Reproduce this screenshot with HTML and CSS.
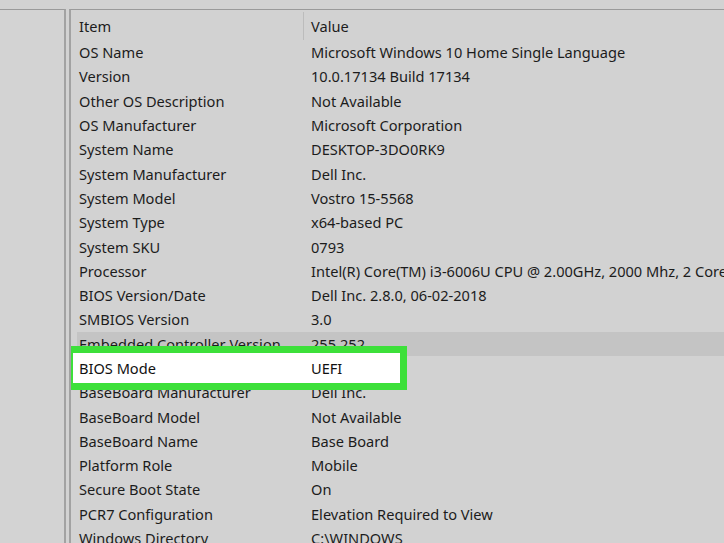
FILE: index.html
```html
<!DOCTYPE html>
<html>
<head>
<meta charset="utf-8">
<link rel="stylesheet" href="styles.css">
</head>
<body>
<div class="window">
  <div class="tree-pane"></div>
  <div class="list-pane">
    <div class="list-header">
      <div class="col-item">Item</div>
      <div class="col-value">Value</div>
    </div>
    <div class="rows">
      <div class="row"><div class="col-item">OS Name</div><div class="col-value">Microsoft Windows 10 Home Single Language</div></div>
      <div class="row"><div class="col-item">Version</div><div class="col-value">10.0.17134 Build 17134</div></div>
      <div class="row"><div class="col-item">Other OS Description</div><div class="col-value">Not Available</div></div>
      <div class="row"><div class="col-item">OS Manufacturer</div><div class="col-value">Microsoft Corporation</div></div>
      <div class="row"><div class="col-item">System Name</div><div class="col-value">DESKTOP-3DO0RK9</div></div>
      <div class="row"><div class="col-item">System Manufacturer</div><div class="col-value">Dell Inc.</div></div>
      <div class="row"><div class="col-item">System Model</div><div class="col-value">Vostro 15-5568</div></div>
      <div class="row"><div class="col-item">System Type</div><div class="col-value">x64-based PC</div></div>
      <div class="row"><div class="col-item">System SKU</div><div class="col-value">0793</div></div>
      <div class="row"><div class="col-item">Processor</div><div class="col-value">Intel(R) Core(TM) i3-6006U CPU @ 2.00GHz, 2000 Mhz, 2 Core(s), 4 Logical Processor(s)</div></div>
      <div class="row"><div class="col-item">BIOS Version/Date</div><div class="col-value">Dell Inc. 2.8.0, 06-02-2018</div></div>
      <div class="row"><div class="col-item">SMBIOS Version</div><div class="col-value">3.0</div></div>
      <div class="row selected"><div class="col-item">Embedded Controller Version</div><div class="col-value">255.252</div></div>
      <div class="row callout"><div class="col-item">BIOS Mode</div><div class="col-value">UEFI</div></div>
      <div class="row"><div class="col-item">BaseBoard Manufacturer</div><div class="col-value">Dell Inc.</div></div>
      <div class="row"><div class="col-item">BaseBoard Model</div><div class="col-value">Not Available</div></div>
      <div class="row"><div class="col-item">BaseBoard Name</div><div class="col-value">Base Board</div></div>
      <div class="row"><div class="col-item">Platform Role</div><div class="col-value">Mobile</div></div>
      <div class="row"><div class="col-item">Secure Boot State</div><div class="col-value">On</div></div>
      <div class="row"><div class="col-item">PCR7 Configuration</div><div class="col-value">Elevation Required to View</div></div>
      <div class="row"><div class="col-item">Windows Directory</div><div class="col-value">C:\WINDOWS</div></div>
    </div>
  </div>
</div>
</body>
</html>
```

FILE: styles.css
```css
*, *::before, *::after { box-sizing: border-box; }
html, body {
  margin: 0;
  padding: 0;
  width: 724px;
  height: 543px;
  overflow: hidden;
  background: #d2d2d2;
  font-family: "Noto Sans", "Open Sans", sans-serif;
  font-size: 14.6px;
  color: #1c1c1c;
}
.window {
  display: flex;
  gap: 3px;
  padding-top: 9px;
  height: 543px;
}
.tree-pane {
  width: 66px;
  flex: none;
  border-top: 1px solid #9a9a9a;
  border-right: 2px solid #a2a2a2;
  background: #d3d3d3;
}
.list-pane {
  flex: 1;
  min-width: 0;
  border-top: 1px solid #9a9a9a;
  border-left: 2px solid #a2a2a2;
  background: #d2d2d2;
  overflow: hidden;
}
.list-header {
  display: flex;
  height: 30px;
  align-items: center;
  padding-top: 2px;
}
.list-header .col-item {
  border-right: 1px solid #bcbcbc;
  align-self: stretch;
  display: flex;
  align-items: center;
}
.rows {
  display: flex;
  flex-direction: column;
}
.row {
  display: flex;
  height: 24.3px;
  align-items: center;
  white-space: nowrap;
}
.col-item {
  width: 233px;
  flex: none;
  padding-left: 8px;
}
.col-value {
  padding-left: 7px;
  white-space: nowrap;
}
.row.selected {
  background: linear-gradient(to right, transparent 6px, #c4c4c4 6px);
}
.row.callout {
  position: relative;
}
.row.callout::before {
  content: "";
  position: absolute;
  left: -5px;
  top: -10px;
  width: 341px;
  height: 44px;
  border: 7px solid #3de03a;
  background: #ffffff;
  z-index: 0;
}
.row.callout .col-item,
.row.callout .col-value {
  position: relative;
  z-index: 1;
  color: #111;
}
```
